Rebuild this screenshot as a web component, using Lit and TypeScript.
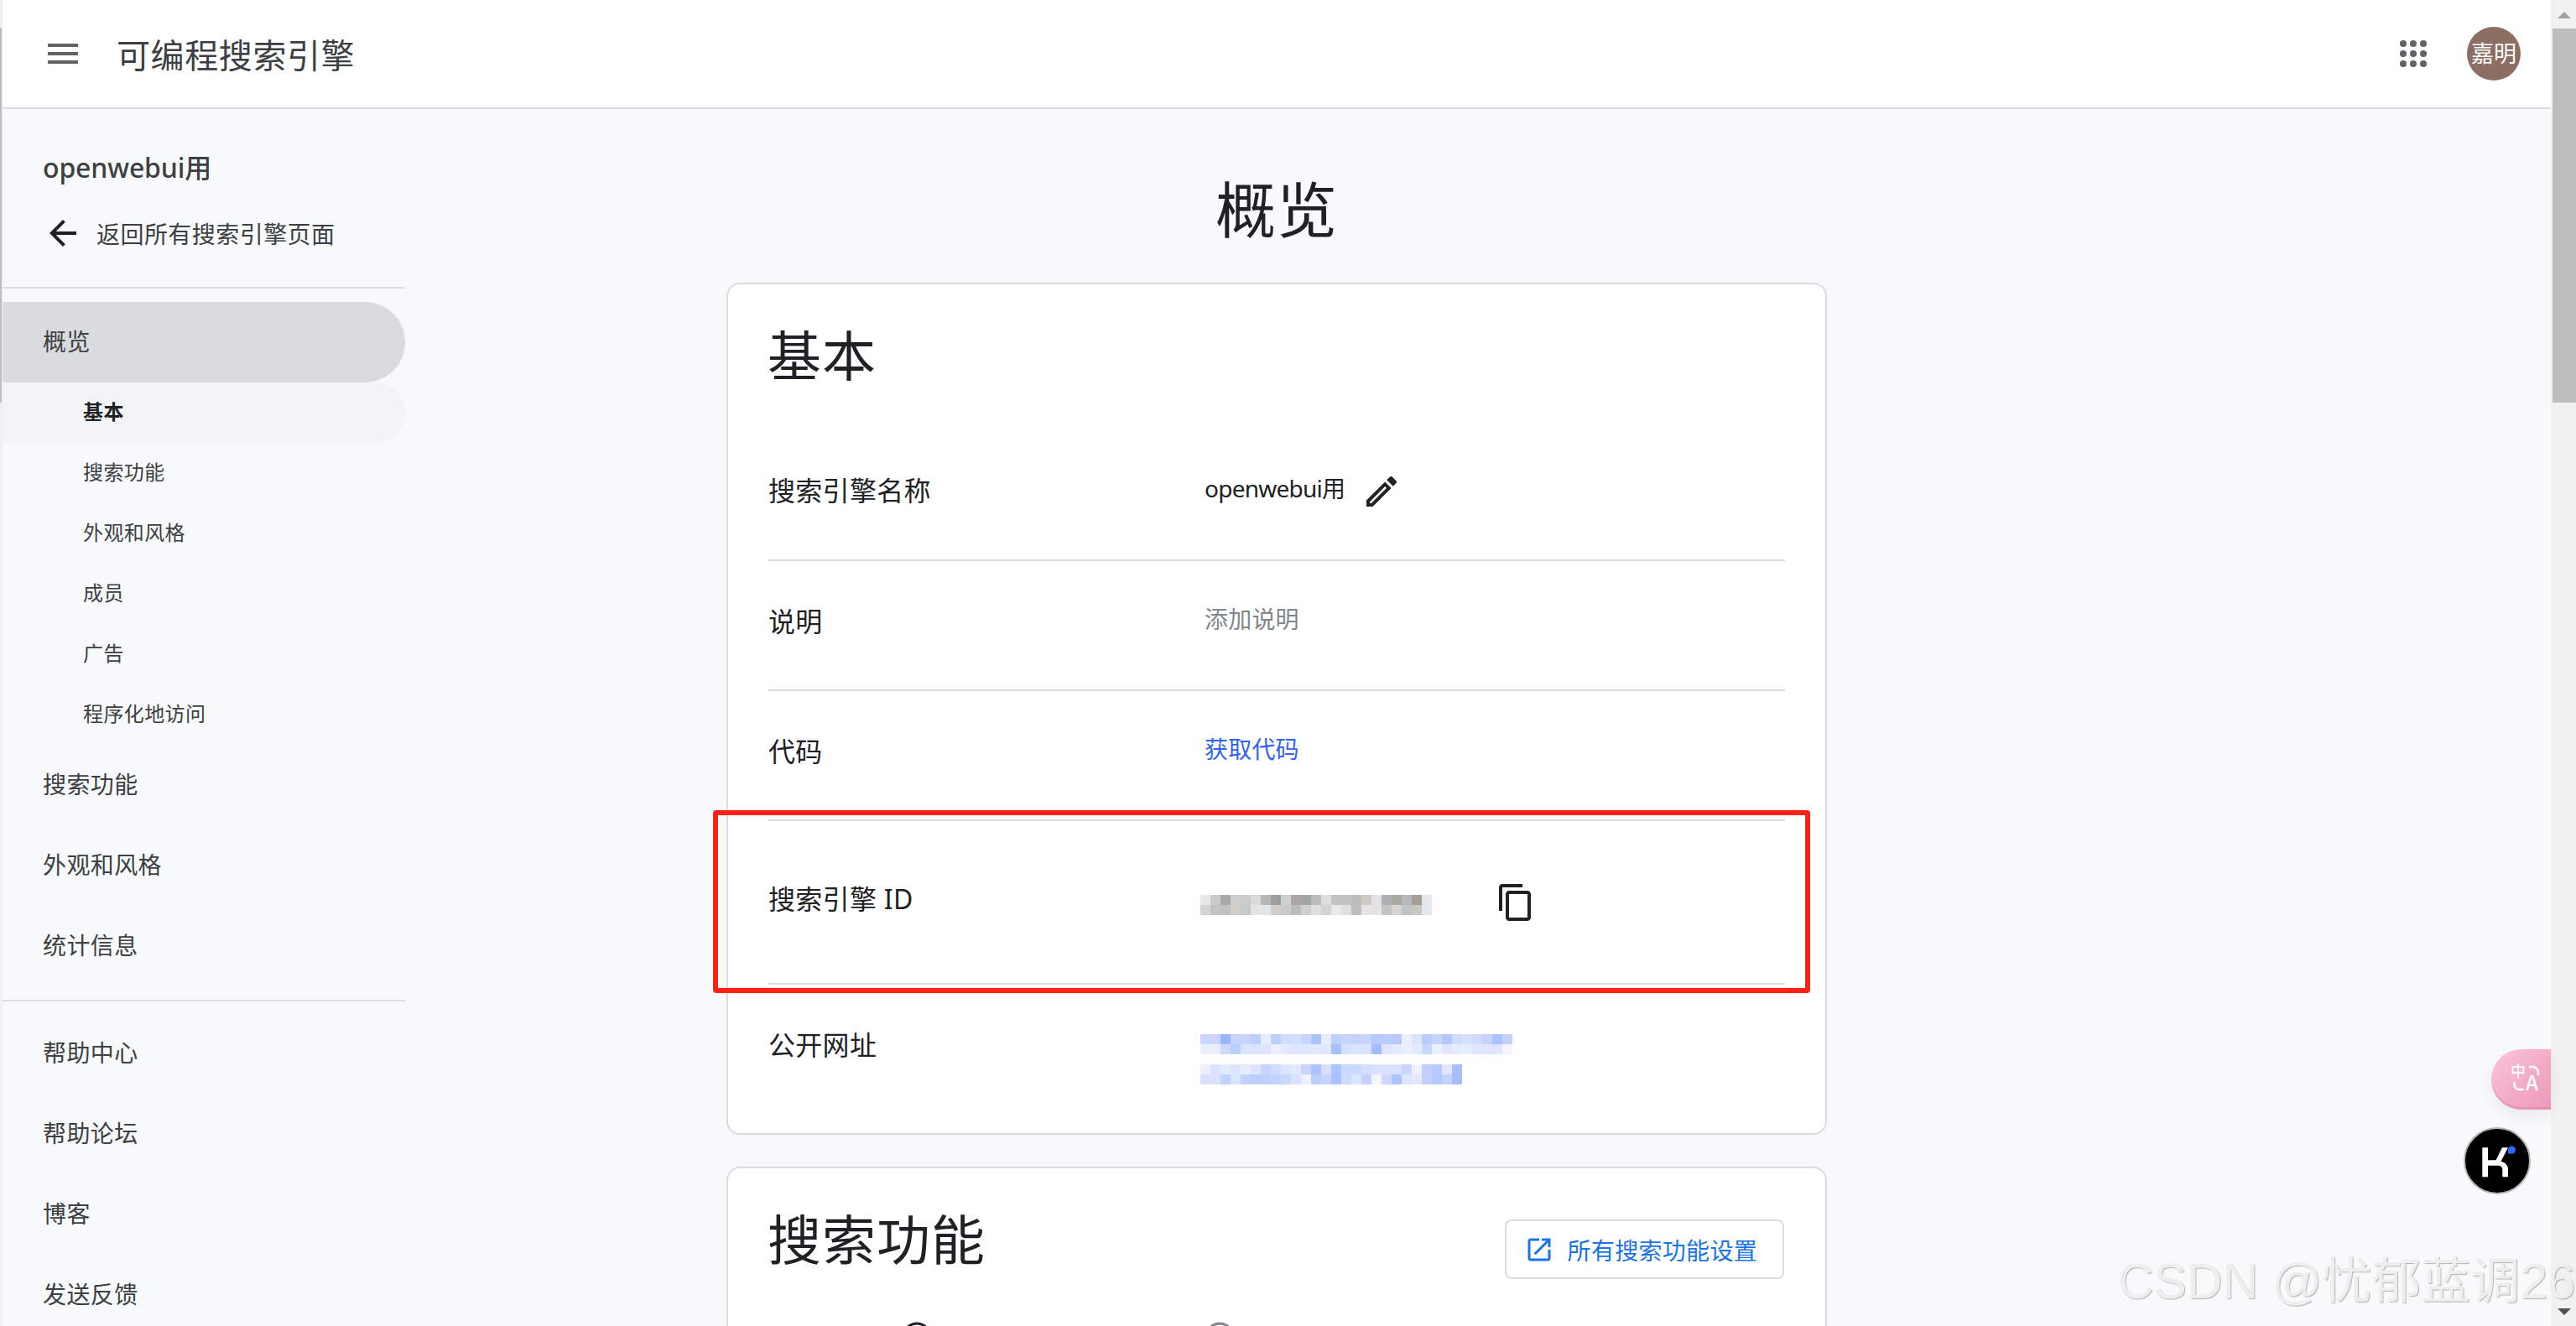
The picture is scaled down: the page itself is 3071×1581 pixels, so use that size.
import { LitElement, html, css } from "lit";
import { customElement } from "lit/decorators.js";

const GRAY = [
  "e8e8e6 cbcbc8 a8a9ab d1cfcc cbcccd dbdbda b6b7b8 a19f9b cfd0d1 aba6a3 a0a5a8 bcbebc dededc c3c3c3 c3c3c3 bfbdb9 cdcac4 e0e3e6 aeafb2 aca8a2 b7b8bc a39f97 e4e8eb",
  "d5d4d2 c3c3c0 c0c1c3 cfcdca c8c9c9 e5e4e2 e2e3e4 d0cdca c8cbcc bcbcbb cfd0d0 e0e0df d3d2cf e9e9ea e0e0df bfbebb e6e5e1 e1e3e5 c2c3c5 d7d5cf c0c4c7 c8c7c3 e4e8eb",
];
const BLUE1 = [
  "c9d6ff ccd4ff 9ab6ff c4d4ff c6d3ff bdd0ff ebeeff bcd0ff d2ddff d3dfff c8d5ff abc4ff e8ecff bed2ff c8d6ff c4d3ff c5d4ff b5cbff bccbff b6caff ebefff dee4ff b8ccff c8d6ff b6c7ff d0ddff d6e0ff d2dbff c6d3ff a9c3ff c5d0ff",
  "ebf0ff eaefff d0d9ff bbcfff dae4ff dae4ff dfe4ff ebf0ff e5e9ff dfe6ff dee7ff e0eaff e3e8ff a7c1ff d5dfff dce5ff dbe0ff a2bcff e0e4ff e3ebff ebefff e3e9ff c8d8ff ecf0ff e2e5ff e2ebff e9eeff dee7ff dde6ff dde6ff f3f6ff",
];
const BLUE2 = [
  "ebefff d9e2ff e2ecff dce7ff e7ecff dfe3ff c7d6ff d0dcff dee6ff e3e9ff c9d4ff abc4ff dadfff abc3ff cbdaff c9d9ff d9deff d7e2ff dbe3ff dae3ff c9d7ff f0f2ff c3cdff b6ccff e2e6ff a6bdff",
  "d9e1ff dae2ff bfd3ff d9e6ff c4d1ff bccdff c1d1ff c2d4ff cad7ff d9e2ff edf1ff bbcfff c8d3ff aac3ff cddbff dce6ff c2d1ff f2f6ff d0d6ff adc5ff dde6ff e4e9ff c2d0ff b4caff c2d2ff a6bdff",
];

const mosaic = (rows: string[]) => html`<div class="mosaic">
  ${rows.map(
    (r) => html`<div class="mrow">${r.split(" ").map((c) => html`<i style="background:#${c}"></i>`)}</div>`
  )}
</div>`;

const SUB = ["搜索功能", "外观和风格", "成员", "广告", "程序化地访问"];
const MAIN = ["搜索功能", "外观和风格", "统计信息"];
const HELP = ["帮助中心", "帮助论坛", "博客", "发送反馈"];

@customElement("app-root")
export class AppRoot extends LitElement {
  static styles = css`
    :host {
      display: block;
      width: 3071px;
      height: 1581px;
      overflow: hidden;
      position: relative;
      background: #f8f9fa;
      color: #202124;
      font-family: "Noto Sans", "Noto Sans CJK SC", sans-serif;
    }
    .page { display: flex; height: 1581px; }
    .strip { width: 3px; flex: none; background: #f1f1f1; padding-top: 33px; box-sizing: border-box; }
    .strip div { width: 2px; height: 447px; background: #bdbdbd; }
    .center { flex: 1; min-width: 0; display: flex; flex-direction: column; }
    .topbar {
      height: 130px; flex: none; box-sizing: border-box; background: #fff;
      border-bottom: 2px solid #dadce0; display: flex; align-items: center;
      padding: 0 36px 0 48px;
    }
    .topbar svg { display: block; }
    .menu { fill: #5f6368; width: 48px; height: 48px; }
    .product { margin-left: 40px; font-size: 40px; line-height: 60px; color: #3c4043; letter-spacing: 0.6px; position: relative; top: 2px; }
    .spacer { flex: 1; }
    .apps { fill: #5f6368; width: 48px; height: 48px; margin-right: 40px; }
    .avatar {
      width: 64px; height: 64px; border-radius: 50%; background: #8d6e63; color: #fff;
      font-size: 27px; line-height: 64px; text-align: center;
    }
    .body { flex: 1; min-height: 0; display: flex; }
    .side { width: 480px; flex: none; padding-top: 46px; box-sizing: border-box; }
    .engine { padding-left: 48px; font-size: 32px; line-height: 48px; font-weight: 500; color: #3c4043; letter-spacing: -0.15px; }
    .back {
      display: flex; align-items: center; height: 64px; margin-top: 22px; padding-left: 48px;
      font-size: 28px; color: #3c4043; gap: 16px; letter-spacing: 0.45px;
    }
    .back svg { width: 48px; height: 48px; fill: #202124; }
    .rule { height: 2px; background: #dadce0; margin-top: 32px; }
    .rule.low { margin-top: 16px; }
    .nav { padding-top: 16px; }
    .nav.lower { padding-top: 14px; }
    .item {
      height: 96px; box-sizing: border-box; display: flex; align-items: center; padding: 0 0 5px 48px;
      font-size: 28px; color: #3c4043; letter-spacing: 0.4px;
    }
    .item.on { background: #dadbdf; border-radius: 0 48px 48px 0; color: #3c4043; }
    .sub {
      height: 72px; box-sizing: border-box; display: flex; align-items: center; padding: 0 0 5px 96px;
      font-size: 24px; color: #3c4043; letter-spacing: 0.4px;
    }
    .sub.on { background: #f1f3f4; border-radius: 0 36px 36px 0; font-weight: 700; color: #202124; }
    .main {
      flex: 1; min-width: 0; display: flex; flex-direction: column; align-items: center;
      padding: 71px 480px 0 0; box-sizing: border-box;
    }
    .title { margin: 0; font-size: 72px; line-height: 96px; font-weight: 400; color: #202124; letter-spacing: 1px; }
    .card {
      width: 1312px; flex: none; box-sizing: border-box; background: #fff;
      border: 2px solid #dadce0; border-radius: 16px; padding: 37px 48px 0;
    }
    .first { margin-top: 40px; height: 1016px; }
    .second { margin-top: 38px; height: 400px; }
    h2 { margin: 0 0 0 -1px; font-size: 64px; line-height: 96px; font-weight: 400; color: #202124; letter-spacing: 1px; }
    .head { display: flex; justify-content: space-between; align-items: flex-start; }
    .row {
      display: grid; grid-template-columns: 520px 1fr; align-items: start;
      padding: 48px 0 57px; border-bottom: 2px solid #dadce0; position: relative;
    }
    .row.r1 { margin-top: 41px; }
    .row.tall { padding: 69px 0 72px; }
    .row.last { border-bottom: 0; }
    .label { font-size: 32px; line-height: 48px; color: #202124; letter-spacing: 0.3px; }
    .value { font-size: 28px; line-height: 42px; color: #202124; letter-spacing: 0.2px; }
    .value.flex { display: flex; align-items: flex-start; }
    .plain { letter-spacing: -0.75px; }
    .muted { color: #80868b; }
    .link { color: #2f62f5; }
    .edit { width: 48px; height: 48px; fill: #202124; margin: 1px 0 0 20px; flex: none; }
    .idval { display: flex; align-items: flex-start; margin: 4px 0 0 -5px; }
    .idval .mosaic { margin-top: 15px; }
    .copy { width: 48px; height: 48px; fill: #202124; margin-left: 76px; flex: none; }
    .urlval { margin: 11px 0 0 -5px; display: flex; flex-direction: column; gap: 12px; }
    .mosaic { display: flex; flex-direction: column; }
    .mrow { display: flex; height: 12px; }
    .mrow i { display: block; width: 12px; height: 12px; }
    .redbox {
      position: absolute; left: -66px; top: -13px; width: 1308px; height: 218px; box-sizing: border-box;
      border: 6px solid #ff2113; border-radius: 4px; pointer-events: none;
    }
    .button {
      display: flex; align-items: center; gap: 16px; height: 71px; box-sizing: border-box;
      margin: 24px 1px 0 0; border: 2px solid #dadce0; border-radius: 8px; padding: 0 30px 0 21px;
      font-size: 28px; color: #1a73e8; background: #fff; letter-spacing: 0.3px;
    }
    .button svg { width: 36px; height: 36px; fill: #1a73e8; }
    .row.cut { margin-top: 50px; padding: 0; border: 0; }
    .withhelp { display: flex; align-items: flex-start; }
    .q { width: 36px; height: 36px; fill: none; stroke-width: 3; flex: none; }
    .q.dark { stroke: #202124; margin-left: 30px; }
    .q.grey { stroke: #80868b; }
    .bar {
      width: 30px; flex: none; background: #f1f1f1; display: flex; flex-direction: column;
      box-sizing: border-box; padding-left: 2px; position: relative;
    }
    .bar .up { height: 34px; display: flex; align-items: flex-start; justify-content: center; }
    .bar .up svg { width: 16px; height: 8px; margin-top: 14px; fill: #a3a3a3; }
    .bar .thumb { height: 446px; background: #bdbdbd; }
    .bar .rest { flex: 1; }
    .bar .down { height: 21px; display: flex; justify-content: center; }
    .bar .down svg { width: 16px; height: 8px; fill: #505050; }
    .translate {
      position: absolute; right: 30px; top: 1251px; width: 71px; height: 72px; box-sizing: border-box;
      border-radius: 36px 0 0 36px; background: linear-gradient(135deg, #fbc5da, #ec97b9);
      box-shadow: 0 8px 18px rgba(0, 0, 0, 0.06), inset 0 -3px 0 rgba(222, 130, 170, 0.45);
    }
    .translate svg { display: block; width: 71px; height: 72px; }
    .translate text { fill: #fff; font-family: "Noto Sans CJK SC", sans-serif; font-weight: 500; }
    .translate path { fill: none; stroke: #fff; stroke-width: 2.4; }
    .kimi { position: absolute; left: 2937px; top: 1344px; width: 80px; height: 80px; display: block; }
    .mark {
      position: absolute; left: 2525px; top: 1488px; white-space: nowrap; pointer-events: none;
      font-family: "Liberation Sans", "Noto Sans CJK SC", sans-serif; font-size: 59px; line-height: 80px;
      color: #eeeeee; text-shadow: 1px 1px 1px rgba(0, 0, 0, 0.28);
    }
  `;

  render() {
    return html`
      <div class="page">
        <div class="strip"><div></div></div>
        <div class="center">
          <header class="topbar">
            <svg class="menu" viewBox="0 0 24 24"><path d="M3 18h18v-2H3v2zm0-5h18v-2H3v2zm0-7v2h18V6H3z" /></svg>
            <div class="product">可编程搜索引擎</div>
            <div class="spacer"></div>
            <svg class="apps" viewBox="0 0 48 48">
              ${[12, 24, 36].map((y) =>
                [12, 24, 36].map(
                  (x) => html`<svg x="${x - 4}" y="${y - 4}" width="8" height="8" viewBox="0 0 8 8"><circle cx="4" cy="4" r="4" /></svg>`
                )
              )}
            </svg>
            <div class="avatar">嘉明</div>
          </header>
          <div class="body">
            <aside class="side">
              <div class="engine">openwebui用</div>
              <div class="back">
                <svg viewBox="0 0 24 24"><path d="M20 11H7.83l5.59-5.59L12 4l-8 8 8 8 1.41-1.41L7.83 13H20v-2z" /></svg>
                <span>返回所有搜索引擎页面</span>
              </div>
              <div class="rule"></div>
              <nav class="nav">
                <div class="item on">概览</div>
                <div class="sub on">基本</div>
                ${SUB.map((s) => html`<div class="sub">${s}</div>`)}
                ${MAIN.map((s) => html`<div class="item">${s}</div>`)}
              </nav>
              <div class="rule low"></div>
              <nav class="nav lower">${HELP.map((s) => html`<div class="item">${s}</div>`)}</nav>
            </aside>
            <main class="main">
              <h1 class="title">概览</h1>
              <section class="card first">
                <h2>基本</h2>
                <div class="row r1">
                  <div class="label">搜索引擎名称</div>
                  <div class="value flex">
                    <span class="plain">openwebui用</span>
                    <svg class="edit" viewBox="0 0 24 24"><path d="M14.06 9.02l.92.92L5.92 19H5v-.92l9.06-9.06M17.66 3c-.25 0-.51.1-.7.29l-1.83 1.83 3.75 3.75 1.83-1.83c.39-.39.39-1.02 0-1.41l-2.34-2.34c-.2-.2-.45-.29-.71-.29zm-3.6 3.19L3 17.25V21h3.75L17.81 9.94l-3.75-3.75z" /></svg>
                  </div>
                </div>
                <div class="row">
                  <div class="label">说明</div>
                  <div class="value muted">添加说明</div>
                </div>
                <div class="row">
                  <div class="label">代码</div>
                  <div class="value link">获取代码</div>
                </div>
                <div class="row tall">
                  <div class="label">搜索引擎 ID</div>
                  <div class="idval">
                    ${mosaic(GRAY)}
                    <svg class="copy" viewBox="0 0 24 24"><path d="M16 1H4c-1.1 0-2 .9-2 2v14h2V3h12V1zm3 4H8c-1.1 0-2 .9-2 2v14c0 1.1.9 2 2 2h11c1.1 0 2-.9 2-2V7c0-1.1-.9-2-2-2zm0 16H8V7h11v14z" /></svg>
                  </div>
                  <div class="redbox"></div>
                </div>
                <div class="row last">
                  <div class="label">公开网址</div>
                  <div class="urlval">
                    ${mosaic(BLUE1)}
                    ${mosaic(BLUE2)}
                  </div>
                </div>
              </section>
              <section class="card second">
                <div class="head">
                  <h2>搜索功能</h2>
                  <div class="button">
                    <svg viewBox="0 0 24 24"><path d="M19 19H5V5h7V3H5c-1.11 0-2 .9-2 2v14c0 1.1.89 2 2 2h14c1.1 0 2-.9 2-2v-7h-2v7zM14 3v2h3.59l-9.83 9.83 1.41 1.41L19 6.41V10h2V3h-7z" /></svg>
                    <span>所有搜索功能设置</span>
                  </div>
                </div>
                <div class="row cut">
                  <div class="withhelp">
                    <div class="label">搜索内容</div>
                    <svg class="q dark" viewBox="0 0 36 36"><circle cx="18" cy="18" r="16" /></svg>
                  </div>
                  <div class="withhelp">
                    <svg class="q grey" viewBox="0 0 36 36"><circle cx="18" cy="18" r="16" /></svg>
                  </div>
                </div>
              </section>
            </main>
          </div>
        </div>
        <div class="bar">
          <div class="up"><svg viewBox="0 0 16 8"><path d="M8 0l8 8H0z" /></svg></div>
          <div class="thumb"></div>
          <div class="rest"></div>
          <div class="down"><svg viewBox="0 0 16 8"><path d="M0 0h16L8 8z" /></svg></div>
        </div>
      </div>
      <div class="translate">
        <svg viewBox="0 0 71 72">
          <text x="23" y="33" font-size="18">中</text>
          <text x="41" y="49" font-size="24">A</text>
          <path d="M45 21h4c4 0 7 3 7 7v3" />
          <path d="M27.500 39v3c0 3.500 2.500 6 6 6h5" />
        </svg>
      </div>
      <svg class="kimi" viewBox="0 0 80 80">
        <circle cx="40" cy="40" r="39" fill="#000" stroke="#b5b5b5" stroke-width="2" />
        <path fill="#fff" d="M22.300 24.300h6.700v15h9.500l7.500-15h7l-8.500 16.500c4.800 1 8.500 4.400 8.500 9.700v8.800h-6.700v-8.800c0-2.900-2-4.800-5-4.800H29v13.600h-6.700z" />
        <path fill="#2f6bff" d="M53 31.500v-4.500c0-2.900 2-4.500 4.500-4.500s4.500 2 4.500 4.500-2 4.500-4.500 4.500z" />
      </svg>
      <div class="mark">CSDN @忧郁蓝调26</div>
    `;
  }
}
